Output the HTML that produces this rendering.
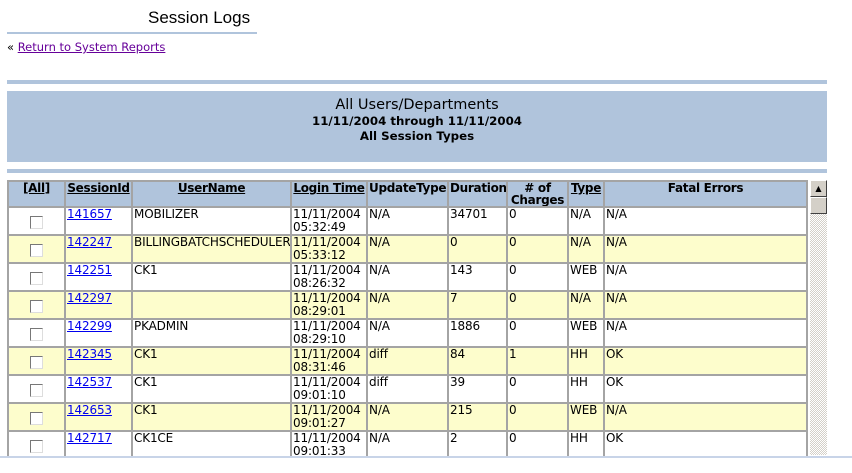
<!DOCTYPE html>
<html><head><style>
body{margin:0;width:852px;height:473px;overflow:hidden;background:#fff;font-family:"DejaVu Sans","Liberation Sans",sans-serif;font-size:12px;position:relative}
.a{position:absolute}
a{color:#0000ee}
table{border-collapse:collapse;table-layout:fixed}
td,th{border:2px solid #a4a4a4;padding:0 1px;vertical-align:top;height:24px;line-height:13px;overflow:hidden;white-space:nowrap;letter-spacing:-0.15px}
th{background:#b0c4dc;font-weight:bold;text-align:center;color:#000;font-size:12px;letter-spacing:-0.3px}
tr.y td{background:#fdfdcc}
.cb{display:inline-block;width:11px;height:11px;border:1px solid #777;border-right-color:#ddd;border-bottom-color:#ddd;background:#fff;margin-top:8px}
td.c{text-align:center}
</style></head><body>
<div class="a" style="left:148px;top:8px;font-family:'Liberation Sans',sans-serif;font-size:17px">Session Logs</div>
<div class="a" style="left:7px;top:32px;width:250px;height:2px;background:#b0c4dc"></div>
<div class="a" style="left:7px;top:40px;font-size:11.5px">« <a href="#" style="color:#660099">Return to System Reports</a></div>
<div class="a" style="left:7px;top:80px;width:820px;height:4px;background:#b0c4dc"></div>
<div class="a" style="left:7px;top:91px;width:820px;height:71px;background:#b0c4dc;text-align:center">
<div style="font-size:14.5px;margin-top:6px">All Users/Departments</div>
<div style="font-weight:bold;margin-top:1px;font-size:11.8px">11/11/2004 through 11/11/2004</div>
<div style="font-weight:bold;margin-top:1px;font-size:11.8px">All Session Types</div>
</div>
<div class="a" style="left:7px;top:169px;width:820px;height:4px;background:#b0c4dc"></div>
<div class="a" style="left:7px;top:180px;width:801px;height:276px;overflow:hidden">
<table style="width:801px">
<colgroup><col style="width:57px"><col style="width:67px"><col style="width:159px"><col style="width:76px"><col style="width:81px"><col style="width:59px"><col style="width:61px"><col style="width:36px"><col style="width:203px"></colgroup>
<tr><th><u>[All]</u></th><th><u>SessionId</u></th><th><u>UserName</u></th><th><u>Login Time</u></th><th>UpdateType</th><th>Duration</th><th style="line-height:12px"># of<br>Charges</th><th><u>Type</u></th><th>Fatal Errors</th></tr>
<tr><td class="c"><span class="cb"></span></td><td><a href="#">141657</a></td><td>MOBILIZER</td><td>11/11/2004<br>05:32:49</td><td>N/A</td><td>34701</td><td>0</td><td>N/A</td><td>N/A</td></tr>
<tr class="y"><td class="c"><span class="cb"></span></td><td><a href="#">142247</a></td><td>BILLINGBATCHSCHEDULER</td><td>11/11/2004<br>05:33:12</td><td>N/A</td><td>0</td><td>0</td><td>N/A</td><td>N/A</td></tr>
<tr><td class="c"><span class="cb"></span></td><td><a href="#">142251</a></td><td>CK1</td><td>11/11/2004<br>08:26:32</td><td>N/A</td><td>143</td><td>0</td><td>WEB</td><td>N/A</td></tr>
<tr class="y"><td class="c"><span class="cb"></span></td><td><a href="#">142297</a></td><td></td><td>11/11/2004<br>08:29:01</td><td>N/A</td><td>7</td><td>0</td><td>N/A</td><td>N/A</td></tr>
<tr><td class="c"><span class="cb"></span></td><td><a href="#">142299</a></td><td>PKADMIN</td><td>11/11/2004<br>08:29:10</td><td>N/A</td><td>1886</td><td>0</td><td>WEB</td><td>N/A</td></tr>
<tr class="y"><td class="c"><span class="cb"></span></td><td><a href="#">142345</a></td><td>CK1</td><td>11/11/2004<br>08:31:46</td><td>diff</td><td>84</td><td>1</td><td>HH</td><td>OK</td></tr>
<tr><td class="c"><span class="cb"></span></td><td><a href="#">142537</a></td><td>CK1</td><td>11/11/2004<br>09:01:10</td><td>diff</td><td>39</td><td>0</td><td>HH</td><td>OK</td></tr>
<tr class="y"><td class="c"><span class="cb"></span></td><td><a href="#">142653</a></td><td>CK1</td><td>11/11/2004<br>09:01:27</td><td>N/A</td><td>215</td><td>0</td><td>WEB</td><td>N/A</td></tr>
<tr><td class="c"><span class="cb"></span></td><td><a href="#">142717</a></td><td>CK1CE</td><td>11/11/2004<br>09:01:33</td><td>N/A</td><td>2</td><td>0</td><td>HH</td><td>OK</td></tr>
</table></div>
<div class="a" style="left:810px;top:180px;width:17px;height:275px;background:repeating-conic-gradient(#d4d0c8 0 25%,#fff 0 50%) 0 0/2px 2px"></div>
<div class="a" style="left:810px;top:180px;width:15px;height:15px;background:#d4d0c8;border:1px solid;border-color:#fff #404040 #404040 #fff;text-align:center;font-size:8px;line-height:15px">▲</div>
<div class="a" style="left:810px;top:197px;width:15px;height:15px;background:#d4d0c8;border:1px solid;border-color:#fff #404040 #404040 #fff"></div>
<div class="a" style="left:0;top:456px;width:852px;height:2px;background:#c8d4e8"></div>
</body></html>
